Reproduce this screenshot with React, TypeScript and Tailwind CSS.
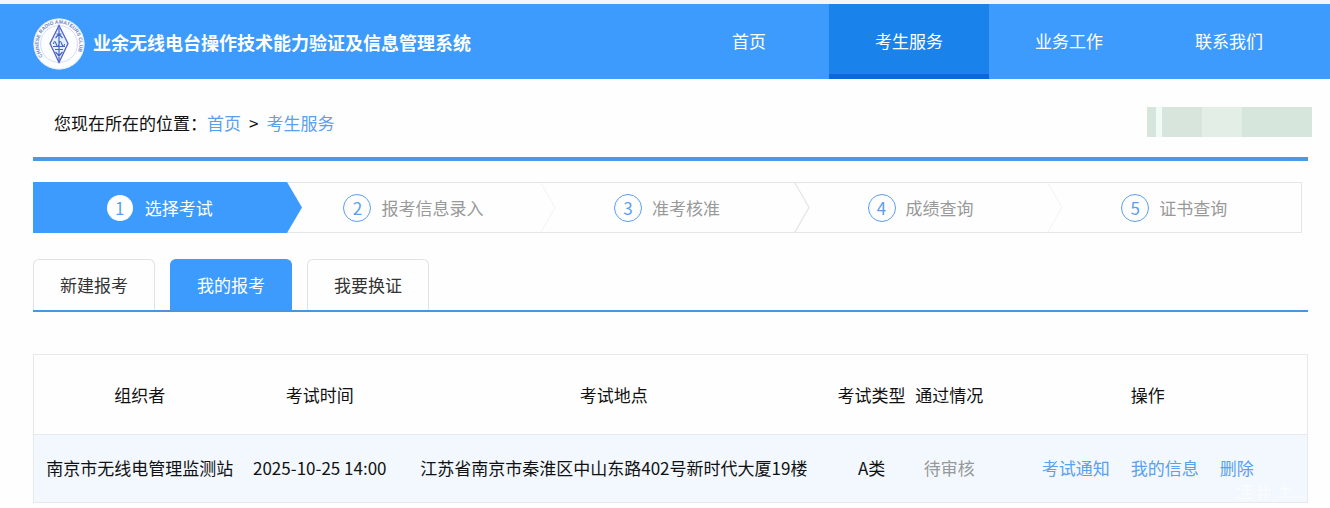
import React from "react";

const navItems = [
  { label: "首页", active: false },
  { label: "考生服务", active: true },
  { label: "业务工作", active: false },
  { label: "联系我们", active: false },
];

const steps = ["选择考试", "报考信息录入", "准考核准", "成绩查询", "证书查询"];

const tabs = ["新建报考", "我的报考", "我要换证"];

const columns = [
  { title: "组织者", width: "w-[16.6%]" },
  { title: "考试时间", width: "w-[11.7%]" },
  { title: "考试地点", width: "w-[34.5%]" },
  { title: "考试类型", width: "w-[6%]" },
  { title: "通过情况", width: "w-[6.2%]" },
  { title: "操作", width: "w-[25%]" },
];

function Logo() {
  return (
    <svg viewBox="0 0 52 52" className="size-[52px] shrink-0" aria-hidden="true">
      <defs>
        <path id="ring" d="M9.7 38.3 A20.4 20.4 0 1 1 42.3 38.3 L38 44" />
      </defs>
      <circle cx="26" cy="26" r="25.5" fill="#fdfeff" />
      <circle cx="26" cy="26" r="25" fill="none" stroke="#dbe6fb" strokeWidth="0.8" />
      <circle cx="26" cy="26" r="18.4" fill="none" stroke="#c3cdee" strokeWidth="0.7" />
      <text fontFamily="Liberation Sans" fontSize="5" fontWeight="700" fill="#6f84c4">
        <textPath href="#ring" startOffset="0">
          CHINESE RADIO AMATEURS CLUB
        </textPath>
      </text>
      <path d="M26 7.5 L35 25.5 L26 44.5 L17 25.5 Z" fill="#e6efff" stroke="#5363c4" strokeWidth="1.3" />
      <path
        d="M26 10 V43 M23.5 16 H28.5 M22.5 20 L26 16 L29.5 20 M20.5 26 Q21.5 21 23.2 26 T26 26 T28.8 26 T31.5 26 M20 28.5 H32 M22 31.5 H30 M22.5 34 L26 38 L29.5 34"
        fill="none"
        stroke="#4767bf"
        strokeWidth="1.2"
      />
    </svg>
  );
}

function Header() {
  return (
    <header className="flex h-[79px] items-stretch justify-between border-t-4 border-[#f5f4f8] bg-[#3c9bfd] pl-[33px] pr-[21px] text-white">
      <div className="flex items-center gap-2 pt-1">
        <Logo />
        <h1 className="whitespace-nowrap pb-1 text-lg font-bold">业余无线电台操作技术能力验证及信息管理系统</h1>
      </div>
      <nav className="flex">
        {navItems.map((item) => (
          <a
            key={item.label}
            href="#"
            className={
              item.active
                ? "flex w-40 items-center justify-center border-b-[5px] border-[#0b6bd6] bg-[#1a82eb] pt-1"
                : "flex w-40 items-center justify-center border-b-[5px] border-transparent pt-1"
            }
          >
            {item.label}
          </a>
        ))}
      </nav>
    </header>
  );
}

function Breadcrumb() {
  return (
    <div className="flex h-[82px] items-center justify-between border-b-4 border-[#4799e9] pl-[21px]">
      <nav className="flex items-center pt-[10px]" aria-label="位置">
        <span>您现在所在的位置：</span>
        <a href="#" className="text-[#5a9ff0]">首页</a>
        <span className="px-2">&gt;</span>
        <a href="#" className="text-[#5a9ff0]">考生服务</a>
      </nav>
      <div className="-mr-1 mt-2 flex h-[30px]">
        <span className="w-[9px] bg-[#d7e6dd]" />
        <span className="w-[6px] bg-[#f1fbf5]" />
        <span className="w-10 bg-[#d7e5dc]" />
        <span className="w-10 bg-[#e3eee6]" />
        <span className="w-[70px] bg-[#d7e6dd]" />
      </div>
    </div>
  );
}

function Arrow({ index }: { index: number }) {
  if (index === 0) {
    return (
      <svg viewBox="0 0 16 51" className="absolute top-0 left-full z-10 h-[51px] w-4" aria-hidden="true">
        <path d="M0 0 L15 25.5 L0 51 Z" fill="#3c9bfd" />
      </svg>
    );
  }
  return (
    <svg viewBox="0 0 16 51" className="absolute -top-px left-full z-10 h-[51px] w-4" aria-hidden="true">
      <path d="M1 1 L15 25.5 L1 50" fill="none" stroke={index === 2 ? "#e4e4e4" : "#f5f5f5"} strokeWidth="1.2" />
    </svg>
  );
}

function Steps() {
  return (
    <ol className="mr-[6px] mt-[21px] flex h-[51px] border border-l-0 border-[#e6e6e6]">
      {steps.map((step, i) => (
        <li
          key={step}
          className={
            i === 0
              ? "relative -my-px flex flex-1 items-center justify-center gap-3 bg-[#3c9bfd] text-white"
              : "relative flex flex-1 items-center justify-center gap-[10px] text-[#999]"
          }
        >
          <span
            className={
              i === 0
                ? "flex size-[26px] items-center justify-center rounded-full bg-white text-[#5a9ff0]"
                : "flex size-7 items-center justify-center rounded-full border border-[#5a9ff0] text-[#5a9ff0]"
            }
          >
            {i + 1}
          </span>
          <span>{step}</span>
          {i < steps.length - 1 && <Arrow index={i} />}
        </li>
      ))}
    </ol>
  );
}

function Tabs() {
  return (
    <div role="tablist" className="mt-[26px] flex gap-[15px] border-b-2 border-[#4a96dc]">
      {tabs.map((tab, i) => (
        <button
          key={tab}
          type="button"
          role="tab"
          aria-selected={i === 1}
          className={
            i === 1
              ? "h-[51px] w-[122px] rounded-t-md border border-b-0 border-[#3c9bfd] bg-[#3c9bfd] text-white"
              : "h-[51px] w-[122px] rounded-t-md border border-b-0 border-[#e2e2e2] text-[#333]"
          }
        >
          {tab}
        </button>
      ))}
    </div>
  );
}

function Watermark() {
  return (
    <svg viewBox="0 0 74 20" className="absolute bottom-0 right-0 h-5 w-[74px]" aria-hidden="true">
      <path
        d="M3 5 L7 8 M2 15 Q10 18 20 16 M9 4 H19 M9 8 H19 M9 12 H19 M14 3 V13 M27 3 V17 M33 3 V17 M24 8 H38 M24 13 H38 M52 3 V15 M47 7 H58 M45 15 H71"
        fill="none"
        stroke="#ffffff"
        strokeOpacity="0.75"
        strokeWidth="1.2"
      />
    </svg>
  );
}

function ExamTable() {
  return (
    <div className="relative mt-[42px] border border-[#e6e8ea]">
      <table className="w-full table-fixed border-collapse text-center">
        <thead>
          <tr className="h-[79px] border-b border-[#e6e8ea]">
            {columns.map((c) => (
              <th key={c.title} className={`${c.width} whitespace-nowrap pt-[2px] font-normal`}>
                {c.title}
              </th>
            ))}
          </tr>
        </thead>
        <tbody>
          <tr className="h-[68px] whitespace-nowrap bg-[#f2f8fe]">
            <td>南京市无线电管理监测站</td>
            <td>2025-10-25 14:00</td>
            <td>江苏省南京市秦淮区中山东路402号新时代大厦19楼</td>
            <td>A类</td>
            <td className="text-[#999]">待审核</td>
            <td>
              <div className="flex justify-center gap-[21px] text-[#5a9ff0]">
                <a href="#">考试通知</a>
                <a href="#">我的信息</a>
                <a href="#">删除</a>
              </div>
            </td>
          </tr>
        </tbody>
      </table>
      <Watermark />
    </div>
  );
}

export default function App() {
  return (
    <div
      lang="zh-CN"
      className="min-h-screen bg-[#fefefe] font-['Noto_Sans_CJK_SC',sans-serif] text-[17px] leading-6 text-[#111]"
    >
      <Header />
      <main className="pl-[33px] pr-[22px]">
        <Breadcrumb />
        <Steps />
        <Tabs />
        <ExamTable />
      </main>
    </div>
  );
}
